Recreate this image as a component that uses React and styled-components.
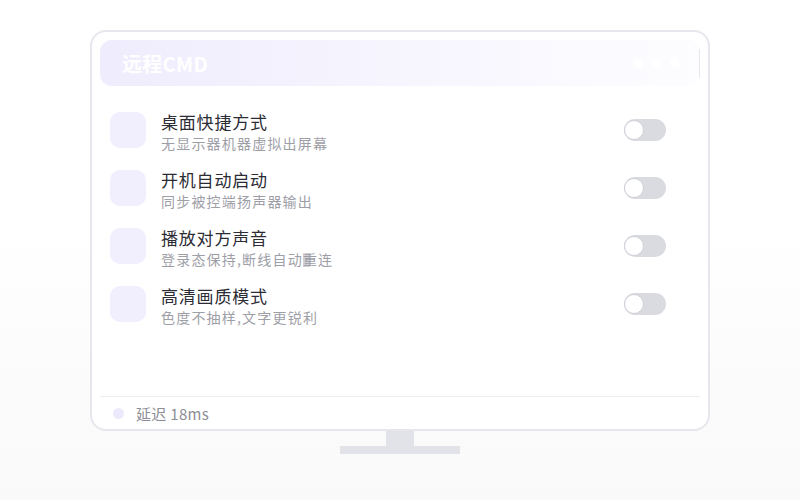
import React from "react";
import styled, { createGlobalStyle } from "styled-components";

const Global = createGlobalStyle`
  html, body { margin: 0; padding: 0; }
  body {
    width: 800px;
    height: 500px;
    overflow: hidden;
    font-family: "Noto Sans CJK SC", "Noto Sans", sans-serif;
    background: linear-gradient(180deg, #ffffff 0%, #ffffff 45%, #f9f9fa 100%);
  }
`;

const Page = styled.div`
  width: 800px;
  height: 500px;
  display: flex;
  flex-direction: column;
  align-items: center;
  padding-top: 30px;
  box-sizing: border-box;
`;

const Screen = styled.div`
  width: 620px;
  height: 401px;
  box-sizing: border-box;
  border: 2px solid #e6e7ec;
  border-radius: 16px;
  background: #ffffff;
  padding: 8px 8px 0 8px;
  display: flex;
  flex-direction: column;
`;

const Header = styled.div`
  height: 46px;
  flex: none;
  border-radius: 12px;
  background: linear-gradient(90deg, #efecfd 0%, #f6f4fe 45%, #fdfdff 100%);
  display: flex;
  align-items: center;
  padding-left: 22px;
`;

const Title = styled.div`
  color: #ffffff;
  font-size: 20px;
  font-weight: 700;
  letter-spacing: 0.3px;
`;

const Controls = styled.div`
  margin-left: auto;
  display: flex;
  align-items: center;
  gap: 9px;
`;

const Dot = styled.span`
  width: 9px;
  height: 9px;
  border-radius: 50%;
  background: #ffffff;
`;

const Divider = styled.span`
  width: 1px;
  height: 29px;
  background: #e6e6ea;
  margin-left: 11px;
`;

const List = styled.div`
  flex: 1;
  display: flex;
  flex-direction: column;
  gap: 22px;
  padding: 26px 34px 0 10px;
`;

const Row = styled.div`
  display: flex;
  align-items: flex-start;
  height: 36px;
`;

const IconBox = styled.div`
  width: 36px;
  height: 36px;
  border-radius: 10px;
  background: #f1eefd;
  flex: none;
`;

const Texts = styled.div`
  margin-left: 15px;
  margin-top: -1px;
  display: flex;
  flex-direction: column;
  flex: 1;
`;

const ItemTitle = styled.div`
  font-size: 17px;
  line-height: 22px;
  color: #2c2c34;
  letter-spacing: 0.8px;
`;

const ItemSub = styled.div`
  font-size: 14px;
  line-height: 20px;
  color: #9e9ea7;
  letter-spacing: 1.2px;
`;

const Mark = styled.span`
  background: linear-gradient(90deg, #d0d0d4 0%, #d0d0d4 45%, transparent 45%);
  background-size: 100% 70%;
  background-position: 0 60%;
  background-repeat: no-repeat;
`;

const Toggle = styled.div`
  width: 42px;
  height: 22px;
  border-radius: 11px;
  background: #d9dbe1;
  margin-top: 7px;
  flex: none;
  display: flex;
  align-items: center;
  padding: 1px;
  box-sizing: border-box;
`;

const Knob = styled.span`
  width: 20px;
  height: 20px;
  box-sizing: border-box;
  border-radius: 50%;
  background: #ffffff;
  border: 1px solid #cfd1d8;
  margin-left: -1px;
`;

const Footer = styled.div`
  height: 32px;
  flex: none;
  border-top: 1px solid #eeeef2;
  display: flex;
  align-items: center;
  padding-left: 13px;
  gap: 12px;
`;

const StatusDot = styled.span`
  width: 11px;
  height: 11px;
  border-radius: 50%;
  background: #ede9fc;
`;

const Latency = styled.span`
  font-size: 15px;
  color: #8d8d96;
  letter-spacing: 0.3px;
`;

const Neck = styled.div`
  width: 28px;
  height: 15px;
  background: #e1e3e8;
`;

const Base = styled.div`
  width: 120px;
  height: 8px;
  background: #e1e3e8;
`;

const items = [
  { title: "桌面快捷方式", sub: "无显示器机器虚拟出屏幕" },
  { title: "开机自动启动", sub: "同步被控端扬声器输出" },
  {
    title: "播放对方声音",
    sub: (
      <>
        登录态保持,断线自动<Mark>重</Mark>连
      </>
    ),
  },
  { title: "高清画质模式", sub: "色度不抽样,文字更锐利" },
];

export default function App() {
  return (
    <>
      <Global />
      <Page>
        <Screen>
          <Header>
            <Title>远程CMD</Title>
            <Controls>
              <Dot />
              <Dot />
              <Dot />
              <Divider />
            </Controls>
          </Header>
          <List>
            {items.map((it, i) => (
              <Row key={i}>
                <IconBox />
                <Texts>
                  <ItemTitle>{it.title}</ItemTitle>
                  <ItemSub>{it.sub}</ItemSub>
                </Texts>
                <Toggle>
                  <Knob />
                </Toggle>
              </Row>
            ))}
          </List>
          <Footer>
            <StatusDot />
            <Latency>延迟 18ms</Latency>
          </Footer>
        </Screen>
        <Neck />
        <Base />
      </Page>
    </>
  );
}
